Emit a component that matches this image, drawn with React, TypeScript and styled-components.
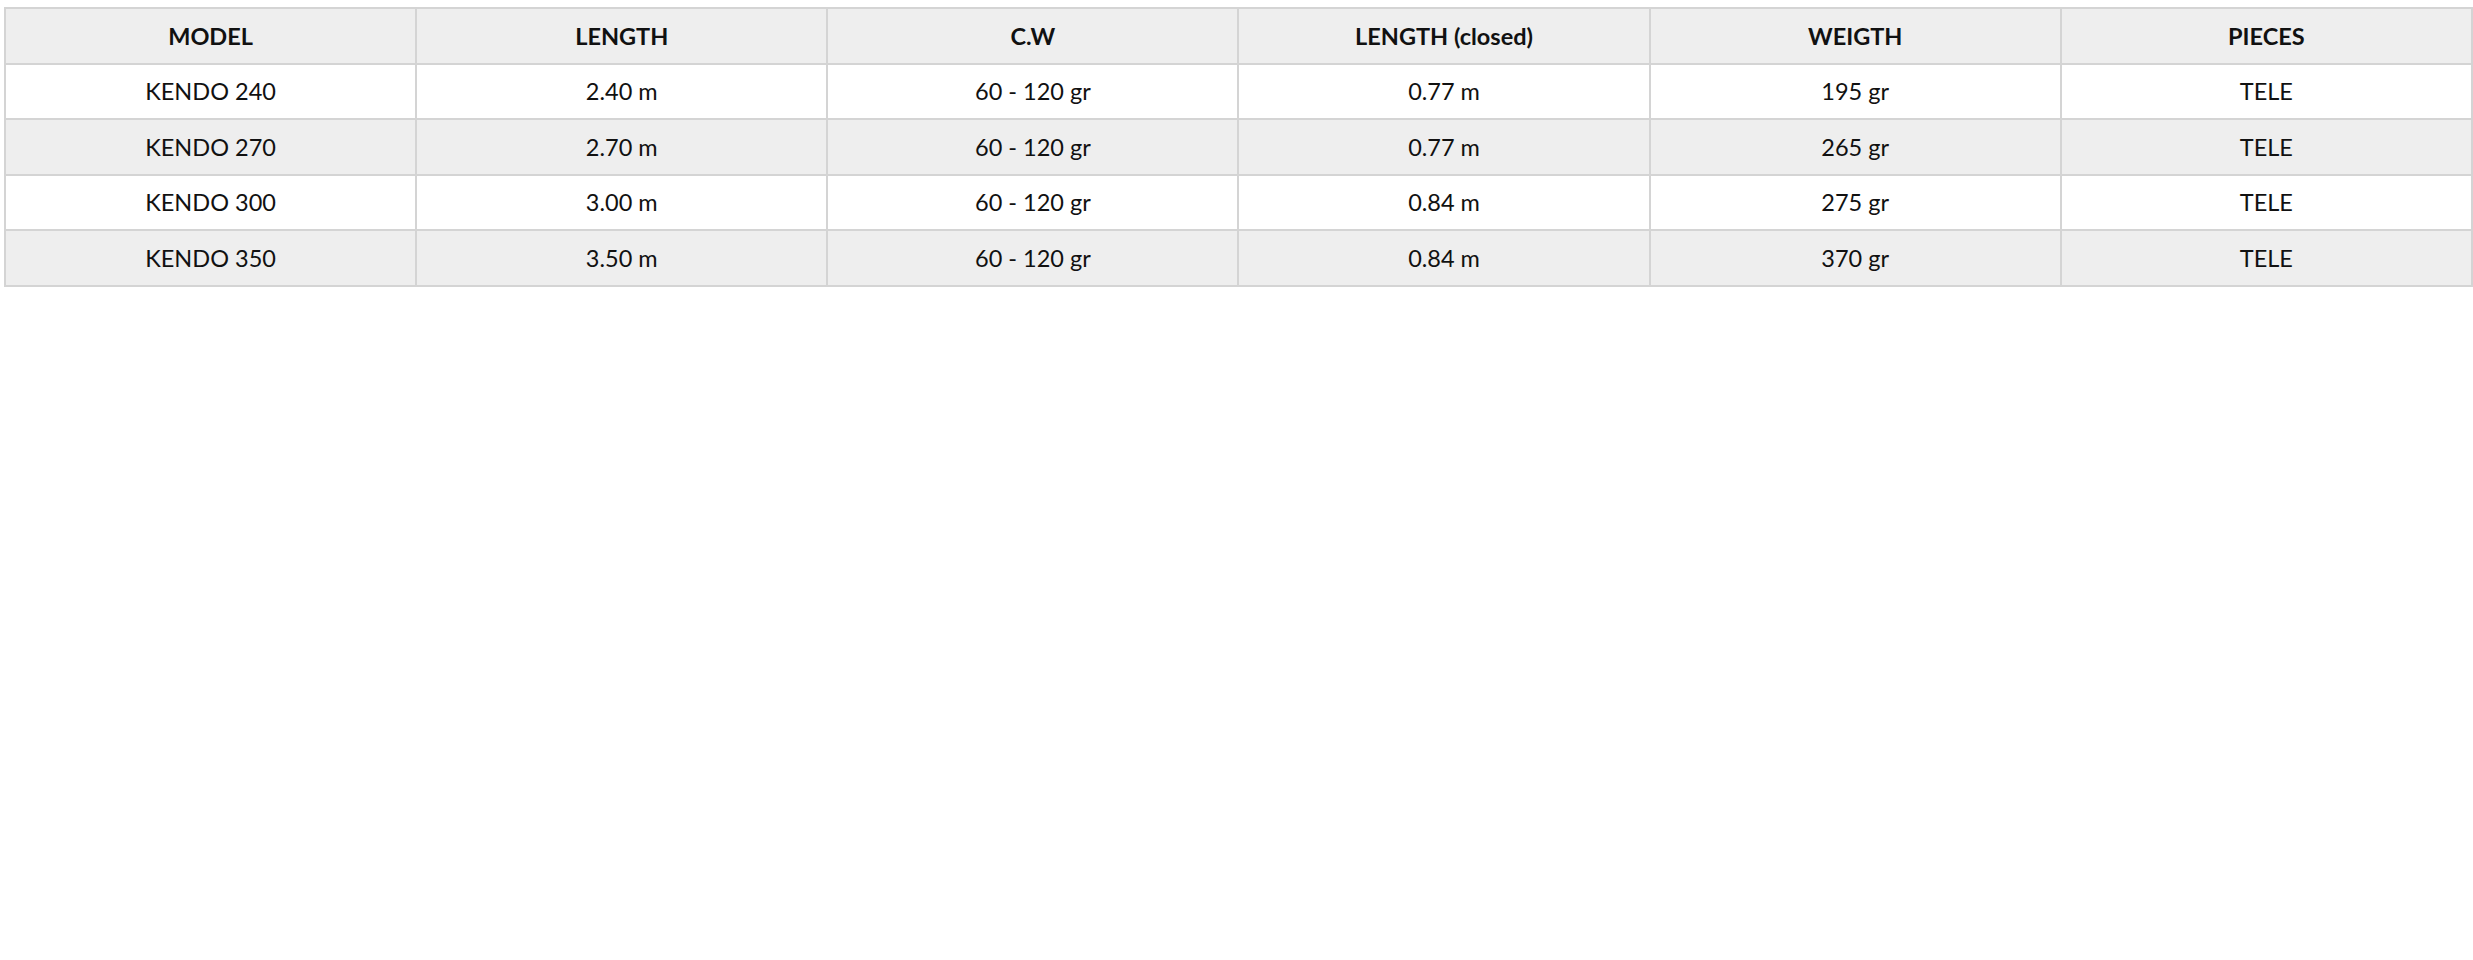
import React from 'react';
import styled, { createGlobalStyle } from 'styled-components';

const GlobalStyle = createGlobalStyle`
  body {
    margin: 0;
    background: #ffffff;
    font-family: 'Lato', 'Liberation Sans', sans-serif;
  }
`;

const rows = [
  ['KENDO 240', '2.40 m', '60 - 120 gr', '0.77 m', '195 gr', 'TELE'],
  ['KENDO 270', '2.70 m', '60 - 120 gr', '0.77 m', '265 gr', 'TELE'],
  ['KENDO 300', '3.00 m', '60 - 120 gr', '0.84 m', '275 gr', 'TELE'],
  ['KENDO 350', '3.50 m', '60 - 120 gr', '0.84 m', '370 gr', 'TELE'],
];

const headers = ['MODEL', 'LENGTH', 'C.W', 'LENGTH (closed)', 'WEIGTH', 'PIECES'];

const App = () => {
  return (
    <Page>
      <GlobalStyle />
      <SpecTable>
        <thead>
          <Row $shaded>
            {headers.map((h) => (
              <HeadCell key={h}>{h}</HeadCell>
            ))}
          </Row>
        </thead>
        <tbody>
          {rows.map((r, i) => (
            <Row key={r[0]} $shaded={i % 2 === 1}>
              {r.map((c, j) => (
                <Cell key={j}>{c}</Cell>
              ))}
            </Row>
          ))}
        </tbody>
      </SpecTable>
    </Page>
  );
};

const Page = styled.div`
  padding: 7px 0 0 4px;
`;

const SpecTable = styled.table`
  width: 100%;
  table-layout: fixed;
  border-collapse: collapse;
  color: #111111;
`;

const Row = styled.tr<{ $shaded?: boolean }>`
  height: 55.5px;
  background: ${(p) => (p.$shaded ? '#eeeeee' : '#ffffff')};
`;

const HeadCell = styled.th`
  border: 2px solid #d4d4d4;
  font-size: 23.5px;
  font-weight: 700;
  text-align: center;
  padding: 0;
`;

const Cell = styled.td`
  border: 2px solid #d4d4d4;
  font-size: 23.5px;
  font-weight: 400;
  text-align: center;
  padding: 0;
`;

export default App;
